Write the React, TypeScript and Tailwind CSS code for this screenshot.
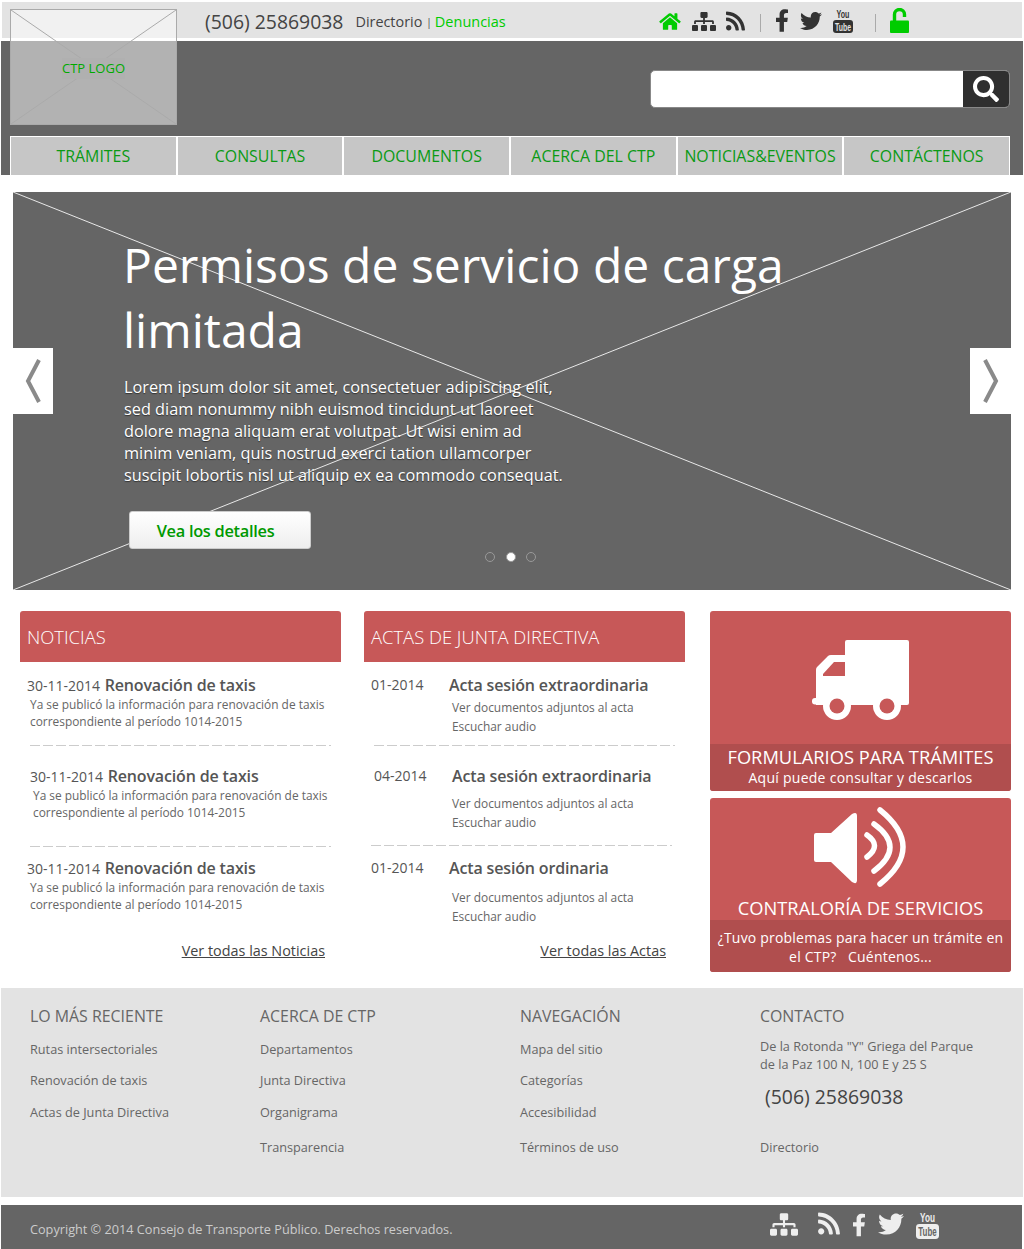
import { FaHome, FaSitemap, FaRss, FaFacebookF, FaTwitter, FaSearch } from "react-icons/fa";

const NAV = ["TRÁMITES", "CONSULTAS", "DOCUMENTOS", "ACERCA DEL CTP", "NOTICIAS&EVENTOS", "CONTÁCTENOS"];

const DASHES = "h-px w-[301px] bg-[repeating-linear-gradient(90deg,#ccc_0,#ccc_10px,transparent_10px,transparent_13px)]";

const NEWS = [
  { className: "pl-[7px] pt-[14px]", dash: "ml-[3px] mt-[15px]" },
  { className: "pl-[10px] pt-[21px]", dash: "mt-[25px]" },
  { className: "pl-[7px] pt-[12px]", dash: "" },
];

const ACTAS = [
  { num: "01-2014", title: "Acta sesión extraordinaria", className: "pl-[7px] pt-[14px]", gap: "mt-[4px]", dash: "ml-[3px] mt-[9px]" },
  { num: "04-2014", title: "Acta sesión extraordinaria", className: "pl-[10px] pt-[21px]", gap: "mt-[9px]", dash: "-ml-[3px] mt-[13px]" },
  { num: "01-2014", title: "Acta sesión ordinaria", className: "pl-[7px] pt-[13px]", gap: "mt-[11px]", dash: "" },
];

function Cross({ color }: { color: string }) {
  return (
    <svg className="absolute inset-0 h-full w-full" preserveAspectRatio="none" viewBox="0 0 100 100">
      <path d="M0 0L100 100M100 0L0 100" stroke={color} strokeWidth={1} vectorEffect="non-scaling-stroke" fill="none" />
    </svg>
  );
}

function Youtube({ color, bg, className }: { color: string; bg: string; className: string }) {
  return (
    <svg className={className} viewBox="0 0 20 25">
      <text transform="translate(10 10) scale(0.62 1)" fontFamily="'Liberation Sans',sans-serif" fontSize="11.5" fontWeight="700" textAnchor="middle" fill={color}>
        You
      </text>
      <rect x="0" y="12" width="20" height="13" rx="3" fill={color} />
      <text transform="translate(10 22.7) scale(0.6 1)" fontFamily="'Liberation Sans',sans-serif" fontSize="11.5" fontWeight="700" textAnchor="middle" fill={bg}>
        Tube
      </text>
    </svg>
  );
}

function OpenLock() {
  return (
    <svg className="mt-[6px] h-[25px] w-[19px]" viewBox="0 0 19 25" fill="none">
      <path d="M4.5 14V6.5a5 5 0 0 1 10 0V9" stroke="#00cc00" strokeWidth="3.4" />
      <rect x="0" y="12.5" width="19" height="12.5" rx="1" fill="#00cc00" />
    </svg>
  );
}

function Truck() {
  return (
    <svg width="98" height="80" viewBox="0 0 98 80" fill="white">
      <path d="M33 2a2 2 0 0 1 2-2h60a2 2 0 0 1 2 2v61a2 2 0 0 1-2 2H4V30q0-2 1-3L16 16q1-1 3-1h14z" />
      <rect x="0" y="58" width="8" height="6.5" rx="3" />
      <path d="M33 22H22L11 34v2h22z" fill="#c75858" />
      <circle cx="25" cy="66" r="14" />
      <circle cx="25" cy="66" r="7.5" fill="#c75858" />
      <circle cx="75" cy="66" r="14" />
      <circle cx="75" cy="66" r="7.5" fill="#c75858" />
    </svg>
  );
}

function Speaker() {
  return (
    <svg width="94" height="82" viewBox="0 0 94 82" fill="none">
      <path d="M2 26H17L38 7q5-3 5 2V73q0 5-5 2L17 55H2q-2 0-2-2V28q0-2 2-2z" fill="white" />
      <path d="M53 28Q68 38.5 53 50" stroke="white" strokeWidth="5.5" strokeLinecap="round" />
      <path d="M60 17Q92 40 60 64" stroke="white" strokeWidth="5.5" strokeLinecap="round" />
      <path d="M66 3Q112 40 66 77" stroke="white" strokeWidth="5.5" strokeLinecap="round" />
    </svg>
  );
}

function FooterCol({ title, links, className }: { title: string; links: [string, string][]; className: string }) {
  return (
    <div className={className}>
      <h4 className="text-[15.9px] leading-[22px] text-[#666]">{title}</h4>
      {links.map(([label, mt]) => (
        <p key={label} className={`text-[12.7px] leading-[18px] text-[#666] ${mt}`}>
          {label}
        </p>
      ))}
    </div>
  );
}

export default function App() {
  return (
    <div className="relative h-[1249px] w-[1024px] overflow-hidden bg-white font-['Open_Sans',sans-serif] text-[#555]">
      {/* Top bar */}
      <div className="mx-[2px] mt-[2px] flex h-[36px] items-start bg-[#e3e3e3] pl-[203px]">
        <div className="flex h-full w-[454px] items-center pt-[4px]">
          <span className="text-[19.4px] text-[#444]">(506) 25869038</span>
          <span className="ml-[12px] text-[14.4px] text-[#444]">Directorio</span>
          <span className="ml-[4px] mr-[3px] text-[10px] text-[#444]">|</span>
          <span className="text-[14.5px] text-[#00cc00]">Denuncias</span>
        </div>
        <FaHome className="mt-[10px] h-[19px] w-[22px] text-[#00cc00]" />
        <FaSitemap className="ml-[11px] mt-[9px] h-[21px] w-[24px] text-[#333]" />
        <FaRss className="ml-[10px] mt-[8px] h-[22px] w-[19px] text-[#333]" />
        <span className="ml-[15px] mt-[12px] h-[18px] w-px bg-[#aaa]" />
        <FaFacebookF className="ml-[14px] mt-[7px] h-[23px] w-[14px] text-[#333]" />
        <FaTwitter className="ml-[11px] mt-[8px] h-[22px] w-[22px] text-[#333]" />
        <Youtube className="ml-[11px] mt-[6px] h-[25px] w-[20px]" color="#333" bg="#e3e3e3" />
        <span className="ml-[22px] mt-[12px] h-[18px] w-px bg-[#aaa]" />
        <div className="ml-[14px]">
          <OpenLock />
        </div>
      </div>

      {/* Header */}
      <div className="ml-px mr-[1px] mt-[3px] h-[134px] bg-[#656565] pl-[9px] pr-[13px]">
        <div className="flex h-[95px] items-start justify-end pt-[29px]">
          <div className="flex h-[38px] w-[360px] overflow-hidden rounded-[5px] border border-[#888] bg-white">
            <div className="flex-1" />
            <div className="flex w-[46px] items-center justify-center bg-[#2f2f2f]">
              <FaSearch className="text-white" size={26} />
            </div>
          </div>
        </div>
        <div className="flex h-[39px] border-t border-r border-white">
          {NAV.map((item, i) => (
            <div key={item} className={`flex flex-1 items-center justify-center border-white bg-[#c6c6c6] pt-[2px] text-[15.9px] text-[#0a9a14] ${i === 0 ? "border-l" : "border-l-2"}`}>
              {item}
            </div>
          ))}
        </div>
      </div>

      {/* Logo overlays the top bar and header */}
      <div className="absolute left-[10px] top-[9px] flex h-[116px] w-[167px] items-center justify-center border border-[#aaa] bg-white/50 pt-[3px]">
        <Cross color="#aaa" />
        <span className="relative flex h-[21px] items-center bg-[#b0b0b0] text-[13px] text-[#00aa00]">CTP LOGO</span>
      </div>

      {/* Hero */}
      <div className="relative ml-[13px] mt-[17px] h-[398px] w-[998px] bg-[#656565]">
        <Cross color="#e8e8e8" />
        <div className="relative pl-[111px] pt-[40px] text-white">
          <h1 className="-ml-px w-[700px] text-[48px] font-normal leading-[65px]">Permisos de servicio de carga limitada</h1>
          <p className="mt-[14px] text-[16.3px] leading-[22px] [text-shadow:0_1px_1px_rgba(0,0,0,0.5)]">
            Lorem ipsum dolor sit amet, consectetuer adipiscing elit,
            <br />
            sed diam nonummy nibh euismod tincidunt ut laoreet
            <br />
            dolore magna aliquam erat volutpat. Ut wisi enim ad
            <br />
            minim veniam, quis nostrud exerci tation ullamcorper
            <br />
            suscipit lobortis nisl ut aliquip ex ea commodo consequat.
          </p>
          <button className="ml-[5px] mt-[25px] flex h-[38px] w-[182px] items-center justify-center rounded-[3px] border border-[#ccc] bg-gradient-to-b from-white to-[#eee] pr-[9px] pt-[2px] text-[16.4px] font-semibold tracking-[-0.3px] text-[#009900]">
            Vea los detalles
          </button>
        </div>
        <div className="absolute left-0 top-[156px] flex h-[66px] w-[40px] items-center justify-center bg-white">
          <svg width="16" height="44" viewBox="0 0 16 44" fill="none">
            <path d="M14 1L3 22l11 21" stroke="#8a8a8a" strokeWidth="4" />
          </svg>
        </div>
        <div className="absolute right-0 top-[156px] flex h-[66px] w-[41px] items-center justify-center bg-white">
          <svg width="16" height="44" viewBox="0 0 16 44" fill="none">
            <path d="M2 1l11 21L2 43" stroke="#8a8a8a" strokeWidth="4" />
          </svg>
        </div>
        <div className="absolute left-[472px] top-[360px] flex gap-[10.5px]">
          <span className="h-[10px] w-[10px] rounded-full border border-[#999]" />
          <span className="h-[10px] w-[10px] rounded-full border border-[#999] bg-white" />
          <span className="h-[10px] w-[10px] rounded-full border border-[#999]" />
        </div>
      </div>

      {/* Columns */}
      <div className="ml-[20px] mt-[21px] flex h-[377px] items-start">
        <div className="w-[321px]">
          <div className="flex h-[51px] items-center rounded-t-[3px] bg-[#c75858] pl-[7px] pt-[1px] text-[18.4px] font-light text-white">NOTICIAS</div>
          {NEWS.map((n, i) => (
            <div key={i} className={n.className}>
              <p className="text-[14px] leading-[18px] text-[#555]">
                30-11-2014 <b className="ml-[1px] text-[16px] font-semibold tracking-[-0.15px]">Renovación de taxis</b>
              </p>
              <p className="mt-px pl-[3px] text-[11.9px] leading-[17px] text-[#666]">
                Ya se publicó la información para renovación de taxis
                <br />
                correspondiente al período 1014-2015
              </p>
              {n.dash && <div className={`${DASHES} ${n.dash}`} />}
            </div>
          ))}
          <p className="mt-[27px] pr-[16px] text-right text-[14.4px] text-[#444] underline">Ver todas las Noticias</p>
        </div>

        <div className="ml-[23px] w-[321px]">
          <div className="flex h-[51px] items-center rounded-t-[3px] bg-[#c75858] pl-[7px] pt-[1px] text-[18.4px] font-light text-white">ACTAS DE JUNTA DIRECTIVA</div>
          {ACTAS.map((a, i) => (
            <div key={i} className={a.className}>
              <div className="flex text-[14px] leading-[18px]">
                <span className="w-[78px]">{a.num}</span>
                <b className="text-[16px] font-semibold tracking-[-0.15px]">{a.title}</b>
              </div>
              <div className={`${a.gap} pl-[81px] text-[11.9px] leading-[19px] text-[#666] ${i === 1 ? "-ml-[3px]" : ""}`}>
                <p>Ver documentos adjuntos al acta</p>
                <p>Escuchar audio</p>
              </div>
              {a.dash && <div className={`${DASHES} ${a.dash}`} />}
            </div>
          ))}
          <p className="mt-[14px] pr-[19px] text-right text-[14.4px] text-[#444] underline">Ver todas las Actas</p>
        </div>

        <div className="ml-[25px] w-[301px]">
          <div className="flex h-[180px] flex-col rounded-[3px] bg-[#c75858] text-white">
            <div className="flex h-[133px] items-start justify-center pl-[1px] pt-[29px]">
              <Truck />
            </div>
            <div className="h-[47px] rounded-b-[3px] bg-[#b04e4e] text-center">
              <p className="text-[18.3px] leading-[25px]">FORMULARIOS PARA TRÁMITES</p>
              <p className="text-[14px] leading-[18px] tracking-[0.27px]">Aquí puede consultar y descarlos</p>
            </div>
          </div>
          <div className="mt-[7px] flex h-[174px] flex-col rounded-[3px] bg-[#c75858] text-white">
            <div className="h-[122px] pt-[9px] text-center">
              <div className="flex justify-center">
                <Speaker />
              </div>
              <p className="mt-[7px] text-[18.3px] leading-[24px]">CONTRALORÍA DE SERVICIOS</p>
            </div>
            <div className="h-[52px] rounded-b-[3px] bg-[#b04e4e] pt-[8px] text-center text-[14px] leading-[19px] tracking-[0.2px]">
              ¿Tuvo problemas para hacer un trámite en
              <br />
              el CTP?&nbsp;&nbsp; Cuéntenos...
            </div>
          </div>
        </div>
      </div>

      {/* Footer */}
      <div className="ml-px mr-px flex h-[209px] bg-[#e3e3e3] pt-[17px]">
        <FooterCol
          className="ml-[29px] w-[230px]"
          title="LO MÁS RECIENTE"
          links={[
            ["Rutas intersectoriales", "mt-[13px]"],
            ["Renovación de taxis", "mt-[13px]"],
            ["Actas de Junta Directiva", "mt-[14px]"],
          ]}
        />
        <FooterCol
          className="w-[260px]"
          title="ACERCA DE CTP"
          links={[
            ["Departamentos", "mt-[13px]"],
            ["Junta Directiva", "mt-[13px]"],
            ["Organigrama", "mt-[14px]"],
            ["Transparencia", "mt-[17px]"],
          ]}
        />
        <FooterCol
          className="w-[240px]"
          title="NAVEGACIÓN"
          links={[
            ["Mapa del sitio", "mt-[13px]"],
            ["Categorías", "mt-[13px]"],
            ["Accesibilidad", "mt-[14px]"],
            ["Términos de uso", "mt-[17px]"],
          ]}
        />
        <div>
          <h4 className="text-[15.9px] leading-[22px] text-[#666]">CONTACTO</h4>
          <p className="mt-[10px] text-[12.7px] leading-[18px] text-[#666]">
            De la Rotonda "Y" Griega del Parque
            <br />
            de la Paz 100 N, 100 E y 25 S
          </p>
          <p className="ml-[5px] mt-[10px] text-[19.4px] leading-[28px] text-[#444]">(506) 25869038</p>
          <p className="mt-[27px] text-[12.7px] leading-[18px] text-[#666]">Directorio</p>
        </div>
      </div>

      {/* Bottom bar */}
      <div className="ml-px mr-[2px] mt-[8px] flex h-[44px] items-start bg-[#656565] pl-[29px]">
        <span className="mt-[15px] w-[740px] text-[12.7px] leading-[18px] text-[#ccc]">Copyright © 2014 Consejo de Transporte Público. Derechos reservados.</span>
        <FaSitemap className="mt-[7px] h-[25px] w-[28px] text-[#eee]" />
        <FaRss className="ml-[20px] mt-[6px] h-[25px] w-[22px] text-[#eee]" />
        <FaFacebookF className="ml-[12px] mt-[7px] h-[26px] w-[14px] text-[#eee]" />
        <FaTwitter className="ml-[12px] mt-[6px] h-[26px] w-[26px] text-[#eee]" />
        <Youtube className="ml-[12px] mt-[5px] h-[29px] w-[23px]" color="#eee" bg="#656565" />
      </div>
    </div>
  );
}
